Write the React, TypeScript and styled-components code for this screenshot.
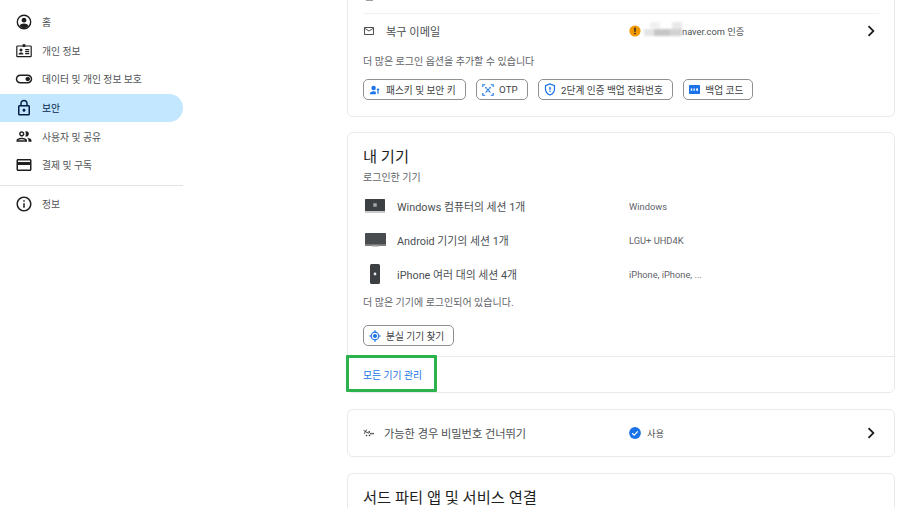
import React from "react";
import styled, { createGlobalStyle } from "styled-components";
import {
  MdOutlineToggleOn,
  MdOutlineLock,
  MdOutlinePeople,
  MdOutlineCreditCard,
  MdOutlineInfo,
  MdOutlineMailOutline,
  MdOutlineChevronRight,
} from "react-icons/md";

const Global = createGlobalStyle`
  html, body { margin: 0; padding: 0; background: #fff; }
  body { font-family: Roboto, "Noto Sans CJK KR", sans-serif; color: #3c4043; }
  * { box-sizing: border-box; }
`;

const Page = styled.div`
  width: 900px;
  height: 508px;
  overflow: hidden;
  display: flex;
  align-items: flex-start;
`;

const Sidebar = styled.nav`
  width: 183px;
  flex: none;
  padding-top: 8px;
  display: flex;
  flex-direction: column;
`;

const NavItem = styled.div<{ $active?: boolean }>`
  height: 28.6px;
  display: flex;
  align-items: center;
  padding-left: 15px;
  font-size: 9.8px;
  color: ${(p) => (p.$active ? "#041e49" : "#515356")};
  background: ${(p) => (p.$active ? "#c2e7ff" : "transparent")};
  border-radius: 0 15px 15px 0;
`;

const NavIcon = styled.span<{ $active?: boolean }>`
  width: 18px;
  height: 18px;
  flex: none;
  margin-right: 9px;
  display: flex;
  align-items: center;
  justify-content: center;
  color: ${(p) => (p.$active ? "#041e49" : "#1f1f1f")};
`;

const NavRule = styled.div`
  height: 1px;
  background: #e3e3e3;
  margin: 5.5px 0 4px;
`;

const Main = styled.main`
  width: 548px;
  flex: none;
  margin: -20px 0 0 164px;
  display: flex;
  flex-direction: column;
`;

const Card = styled.section<{ $gap?: number }>`
  position: relative;
  border: 1px solid #e9eaec;
  border-radius: 6px;
  margin-bottom: ${(p) => p.$gap ?? 15}px;
`;

const TopSliver = styled.div`
  height: 33px;
  margin: 0 15px;
  border-bottom: 1.5px solid #f0f1f2;
  display: flex;
  justify-content: space-between;
  align-items: flex-start;
  padding-top: 2px;
  overflow: hidden;
`;

const SliverMark = styled.span`
  width: 7px;
  height: 18px;
  margin-left: 3px;
  background: #9aa0a6;
`;

const LinkRow = styled.div<{ $h?: number }>`
  height: ${(p) => p.$h ?? 36}px;
  display: flex;
  align-items: center;
  padding: 0 16px 0 15px;
`;

const RowLabel = styled.div<{ $gap: number }>`
  width: 266px;
  flex: none;
  display: flex;
  align-items: center;
  gap: ${(p) => p.$gap}px;
  font-size: 11.2px;
  color: #4c4f52;
  svg { flex: none; }
`;

const RowValue = styled.div<{ $gap: number }>`
  flex: 1;
  display: flex;
  align-items: center;
  gap: ${(p) => p.$gap}px;
  font-size: 9.3px;
  color: #4c4f52;
`;

const Chevron = styled(MdOutlineChevronRight)`
  color: #1f1f1f;
  flex: none;
  margin-right: -4px;
`;

const Note = styled.p<{ $top: number }>`
  margin: ${(p) => p.$top}px 15px 0;
  font-size: 10px;
  line-height: 12px;
  color: #5f6368;
`;

const ChipRow = styled.div<{ $top: number; $bottom: number }>`
  display: flex;
  gap: 10.5px;
  margin: ${(p) => p.$top}px 15px ${(p) => p.$bottom}px;
`;

const Chip = styled.div`
  height: 21px;
  display: inline-flex;
  align-items: center;
  gap: 5px;
  padding: 0 9px 0 5px;
  border: 1px solid #8e918f;
  border-radius: 5px;
  font-size: 9.7px;
  color: #3c4043;
  white-space: nowrap;
  svg { flex: none; }
`;

const Title = styled.h2<{ $bottom?: number }>`
  margin: 13px 15px ${(p) => p.$bottom ?? 0}px;
  font-size: 15.3px;
  line-height: 22px;
  font-weight: 400;
  color: #1f1f1f;
`;

const Subtitle = styled.div`
  margin: 4px 15px 5px;
  font-size: 10px;
  line-height: 12px;
  color: #5f6368;
`;

const DeviceRow = styled.div`
  height: 34px;
  display: flex;
  align-items: center;
  padding-left: 15px;
`;

const DeviceIcon = styled.div`
  width: 24px;
  height: 24px;
  flex: none;
  margin-right: 10px;
  display: flex;
  align-items: center;
  justify-content: center;
`;

const DeviceName = styled.div`
  width: 232px;
  flex: none;
  font-size: 10.85px;
  color: #4c4f52;
`;

const DeviceInfo = styled.div`
  font-size: 9.3px;
  color: #5f6368;
`;

const FooterLink = styled.div`
  height: 36px;
  margin-top: 10px;
  border-top: 1px solid #e9eaec;
  display: flex;
  align-items: center;
  padding-left: 15px;
  font-size: 9.8px;
  color: #1a73e8;
`;

const Highlight = styled.div`
  position: absolute;
  left: -2px;
  bottom: 0;
  width: 91px;
  height: 37px;
  border: 3px solid #2bb24c;
  border-radius: 1px;
  pointer-events: none;
`;

const HomeIcon = () => (
  <svg width="16" height="16" viewBox="0 0 16 16" fill="none">
    <circle cx="8" cy="8" r="6.7" stroke="#1f1f1f" strokeWidth="1.4" />
    <circle cx="8" cy="6.2" r="2.4" fill="#1f1f1f" />
    <path d="M3.4 12c1-1.6 2.8-2.4 4.6-2.4s3.6.8 4.6 2.4c-1.2 1.3-2.8 2.1-4.6 2.1s-3.4-.8-4.6-2.1z" fill="#1f1f1f" />
  </svg>
);

const DotsIcon = () => (
  <svg width="11" height="8" viewBox="0 0 11 8" fill="#3c4043">
    <path d="M.6 1.4 5.6 4.4M1.2 4.8 3.6.6" stroke="#3c4043" strokeWidth="1" fill="none" />
    <circle cx="6.2" cy="3" r=".9" />
    <circle cx="8" cy="4.6" r=".9" />
    <circle cx="10" cy="4.6" r=".9" />
    <circle cx="3.5" cy="6.6" r=".8" />
    <circle cx="6.5" cy="6.4" r=".8" />
  </svg>
);

const BadgeIcon = () => (
  <svg width="16" height="16" viewBox="0 0 16 16" fill="none">
    <rect x=".8" y="3" width="14.4" height="10.7" rx=".8" stroke="#1f1f1f" strokeWidth="1.2" />
    <rect x="6.6" y="1.2" width="2.8" height="2.8" fill="#1f1f1f" />
    <circle cx="5" cy="7" r="1.5" fill="#1f1f1f" />
    <path d="M2.6 11.4c0-1.4 1.2-2 2.4-2s2.4.6 2.4 2z" fill="#1f1f1f" />
    <path d="M9.2 6.6h4M9.2 8.6h4M9.2 10.6h4" stroke="#1f1f1f" strokeWidth="1.1" />
  </svg>
);

const PasskeyIcon = () => (
  <svg width="12" height="12" viewBox="0 0 12 12" fill="#1a73e8">
    <circle cx="4.6" cy="4" r="2.2" />
    <path d="M.8 10.2c0-2 1.8-3 3.8-3 .9 0 1.6.2 2.2.5v2.5z" />
    <circle cx="9" cy="5.6" r="1.2" />
    <path d="M8.4 6.4h1.2v3l-.6.7-.6-.7z" />
  </svg>
);

const OtpIcon = () => (
  <svg width="12" height="12" viewBox="0 0 12 12" fill="none" stroke="#1a73e8" strokeWidth="1.1">
    <path d="M.8 3V.8h2.4M8.8.8h2.4V3M.8 9v2.2h2.4M8.8 11.2h2.4V9" />
    <path d="M3.4 3.2l5.2 5.6M8.6 3.2l-5.2 5.6" strokeDasharray="1.8 .6" strokeWidth="1.3" />
  </svg>
);

const ShieldIcon = () => (
  <svg width="12" height="13" viewBox="0 0 12 13" fill="none">
    <path d="M6 .9 1.5 2.6v3.5c0 2.9 1.9 5 4.5 5.9 2.6-.9 4.5-3 4.5-5.9V2.6z" stroke="#1a73e8" strokeWidth="1.2" />
    <rect x="5.3" y="3.8" width="1.4" height="3" fill="#1a73e8" />
    <circle cx="6" cy="8.3" r=".8" fill="#1a73e8" />
  </svg>
);

const CodeIcon = () => (
  <svg width="11" height="9" viewBox="0 0 11 9">
    <rect width="11" height="9" rx=".8" fill="#1a73e8" />
    <rect x="1.8" y="3.4" width="1.4" height="2.4" fill="#fff" />
    <rect x="4.4" y="3.4" width="1.6" height="2.4" fill="#cfe2fc" />
    <rect x="7.2" y="3.4" width="1.8" height="2.4" fill="#fff" />
  </svg>
);

const WarnIcon = () => (
  <svg width="12" height="12" viewBox="0 0 12 12">
    <circle cx="6" cy="6" r="5.6" fill="#f29900" />
    <rect x="5.3" y="2.6" width="1.4" height="4.2" fill="#202124" />
    <rect x="5.3" y="7.8" width="1.4" height="1.4" fill="#202124" />
  </svg>
);

const CheckIcon = () => (
  <svg width="12" height="12" viewBox="0 0 12 12">
    <circle cx="6" cy="6" r="5.9" fill="#1a73e8" />
    <path d="M3.2 6.2l2 1.9 3.6-3.8" fill="none" stroke="#fff" strokeWidth="1.2" />
  </svg>
);

const TargetIcon = () => (
  <svg width="12" height="12" viewBox="0 0 12 12" fill="none">
    <circle cx="6" cy="6" r="3.8" stroke="#1a73e8" strokeWidth="1.2" />
    <circle cx="6" cy="6" r="2" fill="#1a73e8" />
    <path d="M6 .3v1.6M6 10.1v1.6M.3 6h1.6M10.1 6h1.6" stroke="#1a73e8" strokeWidth="1.2" />
  </svg>
);

const Blur = styled.svg`
  filter: blur(0.8px);
  margin-right: -3px;
  margin-top: -4px;
`;

const BlurMark = () => (
  <Blur width="38" height="14" viewBox="0 0 38 14">
    <rect x="6" y="0" width="10" height="6" fill="#f0f0f0" />
    <rect x="28" y="0" width="10" height="7" fill="#e8e8e8" />
    <rect x="0" y="7" width="10" height="7" fill="#e4e4e4" />
    <rect x="10" y="7" width="16" height="7" fill="#c6c6c6" />
    <rect x="26" y="7" width="12" height="7" fill="#d2d2d2" />
  </Blur>
);

const LaptopIcon = () => (
  <svg width="20" height="15" viewBox="0 0 20 15">
    <rect x="0" y="0" width="20" height="12" rx=".6" fill="#3c4043" />
    <rect x="0" y="12" width="20" height="2" fill="#c8cacc" />
    <rect x="8.4" y="4.4" width="1.4" height="1.4" fill="#dadce0" />
    <rect x="10.2" y="4.4" width="1.4" height="1.4" fill="#dadce0" />
    <rect x="8.4" y="6.2" width="1.4" height="1.4" fill="#dadce0" />
    <rect x="10.2" y="6.2" width="1.4" height="1.4" fill="#dadce0" />
  </svg>
);

const TvIcon = () => (
  <svg width="21" height="14" viewBox="0 0 21 14">
    <rect x="0" y="0" width="21" height="11.6" rx=".6" fill="#4a4d50" />
    <rect x="0" y="11.6" width="21" height="1" fill="#2b2d2f" />
    <rect x="7" y="12.6" width="7" height="1.4" fill="#c8cacc" />
  </svg>
);

const PhoneIcon = () => (
  <svg width="10" height="20" viewBox="0 0 10 20">
    <rect x="0" y="0" width="10" height="20" rx="1.6" fill="#3c4043" />
    <circle cx="5" cy="10" r="1.4" fill="#e8eaed" />
  </svg>
);

export default function App() {
  return (
    <Page>
      <Global />
      <Sidebar>
        <NavItem><NavIcon><HomeIcon /></NavIcon>홈</NavItem>
        <NavItem><NavIcon><BadgeIcon /></NavIcon>개인 정보</NavItem>
        <NavItem><NavIcon><MdOutlineToggleOn size={20} /></NavIcon>데이터 및 개인 정보 보호</NavItem>
        <NavItem $active><NavIcon $active><MdOutlineLock size={18} /></NavIcon>보안</NavItem>
        <NavItem><NavIcon><MdOutlinePeople size={19} /></NavIcon>사용자 및 공유</NavItem>
        <NavItem><NavIcon><MdOutlineCreditCard size={18} /></NavIcon>결제 및 구독</NavItem>
        <NavRule />
        <NavItem><NavIcon><MdOutlineInfo size={18} /></NavIcon>정보</NavItem>
      </Sidebar>
      <Main>
        <Card>
          <TopSliver>
            <SliverMark />
            <Chevron size={22} />
          </TopSliver>
          <LinkRow $h={34}>
            <RowLabel $gap={11}><MdOutlineMailOutline size={12} />복구 이메일</RowLabel>
            <RowValue $gap={3}>
              <WarnIcon />
              <BlurMark />
              naver.com 인증
            </RowValue>
            <Chevron size={22} />
          </LinkRow>
          <Note $top={8}>더 많은 로그인 옵션을 추가할 수 있습니다</Note>
          <ChipRow $top={11} $bottom={16}>
            <Chip><PasskeyIcon />패스키 및 보안 키</Chip>
            <Chip><OtpIcon />OTP</Chip>
            <Chip><ShieldIcon />2단계 인증 백업 전화번호</Chip>
            <Chip><CodeIcon />백업 코드</Chip>
          </ChipRow>
        </Card>
        <Card $gap={16}>
          <Title>내 기기</Title>
          <Subtitle>로그인한 기기</Subtitle>
          <DeviceRow><DeviceIcon><LaptopIcon /></DeviceIcon><DeviceName>Windows 컴퓨터의 세션 1개</DeviceName><DeviceInfo>Windows</DeviceInfo></DeviceRow>
          <DeviceRow><DeviceIcon><TvIcon /></DeviceIcon><DeviceName>Android 기기의 세션 1개</DeviceName><DeviceInfo>LGU+ UHD4K</DeviceInfo></DeviceRow>
          <DeviceRow><DeviceIcon><PhoneIcon /></DeviceIcon><DeviceName>iPhone 여러 대의 세션 4개</DeviceName><DeviceInfo>iPhone, iPhone, ...</DeviceInfo></DeviceRow>
          <Note $top={6}>더 많은 기기에 로그인되어 있습니다.</Note>
          <ChipRow $top={16} $bottom={0}>
            <Chip><TargetIcon />분실 기기 찾기</Chip>
          </ChipRow>
          <FooterLink>모든 기기 관리</FooterLink>
          <Highlight />
        </Card>
        <Card $gap={16}>
          <LinkRow $h={46}>
            <RowLabel $gap={10}><DotsIcon />가능한 경우 비밀번호 건너뛰기</RowLabel>
            <RowValue $gap={6}><CheckIcon />사용</RowValue>
            <Chevron size={22} />
          </LinkRow>
        </Card>
        <Card>
          <Title $bottom={30}>서드 파티 앱 및 서비스 연결</Title>
        </Card>
      </Main>
    </Page>
  );
}
